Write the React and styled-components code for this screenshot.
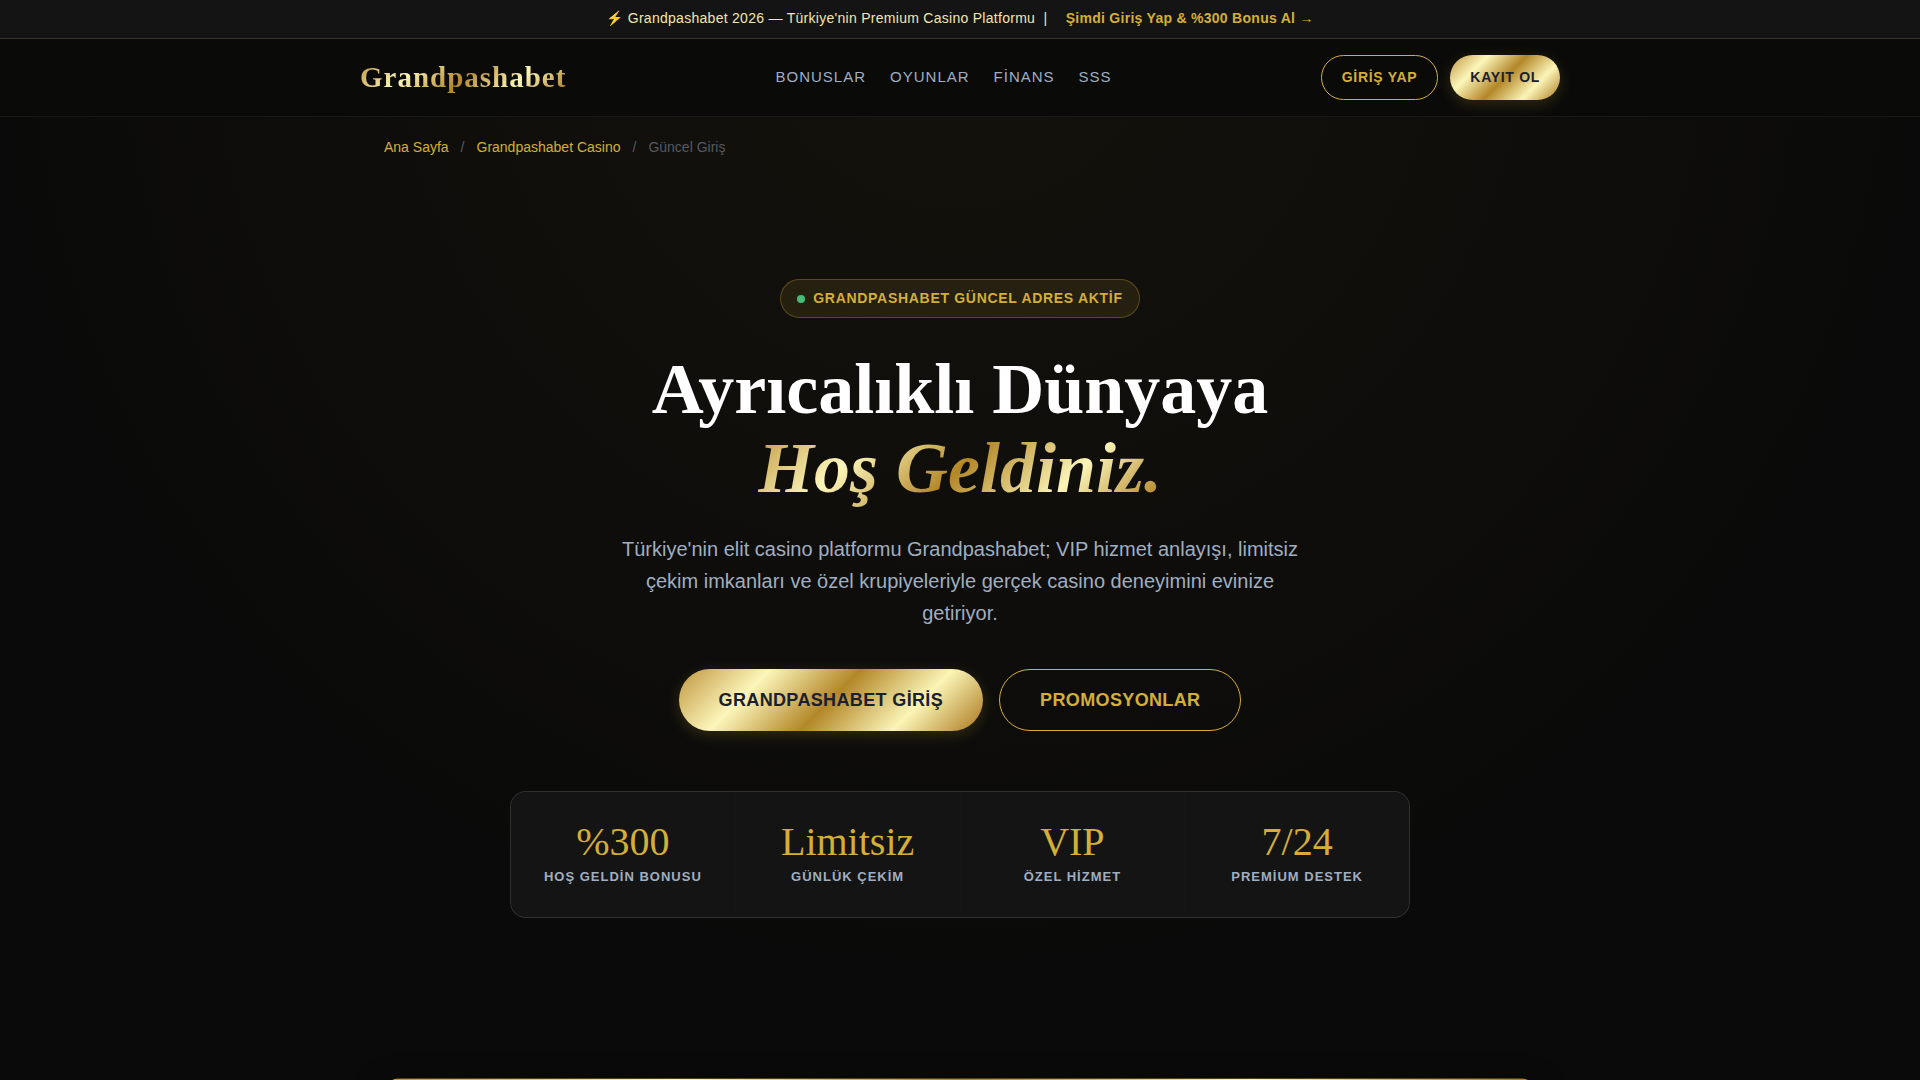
import React from 'react'
import styled, { createGlobalStyle, css } from 'styled-components'

const gold = '#d4af37'
const muted = '#a0aec0'
const goldGradient = 'linear-gradient(135deg, #bf953f 0%, #fcf6ba 25%, #b38728 50%, #fbf5b7 75%, #aa771c 100%)'
const sans = "'Liberation Sans', Arial, sans-serif"
const serif = "'Liberation Serif', 'Times New Roman', serif"

const navLinks = ['Bonuslar', 'Oyunlar', 'Finans', 'SSS']

const stats = [
    { value: '%300', label: 'Hoş Geldin Bonusu' },
    { value: 'Limitsiz', label: 'Günlük Çekim' },
    { value: 'VIP', label: 'Özel Hizmet' },
    { value: '7/24', label: 'Premium Destek' },
]

function App() {
    return (
        <Page lang="tr">
            <GlobalStyle />
            <TopBar>
                <span>⚡ Grandpashabet 2026 — Türkiye'nin Premium Casino Platformu &nbsp;|&nbsp;</span>
                <TopBarLink href="#giris">Şimdi Giriş Yap &amp; %300 Bonus Al →</TopBarLink>
            </TopBar>
            <Header>
                <HeaderInner>
                    <Logo href="#">Grandpashabet</Logo>
                    <Nav>
                        {navLinks.map((link) => (
                            <NavLink key={link} href={`#${link.toLowerCase()}`}>{link}</NavLink>
                        ))}
                    </Nav>
                    <HeaderActions>
                        <Button>Giriş Yap</Button>
                        <Button $filled>Kayıt Ol</Button>
                    </HeaderActions>
                </HeaderInner>
            </Header>
            <main>
                <Breadcrumb aria-label="Sayfa yolu">
                    <a href="#">Ana Sayfa</a>
                    <span>/</span>
                    <a href="#casino">Grandpashabet Casino</a>
                    <span>/</span>
                    <span>Güncel Giriş</span>
                </Breadcrumb>
                <Hero>
                    <Badge>
                        <Dot />
                        Grandpashabet Güncel Adres Aktif
                    </Badge>
                    <Title>
                        Ayrıcalıklı Dünyaya<br />
                        <em>Hoş Geldiniz.</em>
                    </Title>
                    <Lead>
                        Türkiye'nin elit casino platformu Grandpashabet; VIP hizmet anlayışı, limitsiz çekim imkanları ve özel krupiyeleriyle gerçek casino deneyimini evinize getiriyor.
                    </Lead>
                    <HeroActions>
                        <Button $large $filled>Grandpashabet Giriş</Button>
                        <Button $large>Promosyonlar</Button>
                    </HeroActions>
                    <Stats>
                        {stats.map((stat) => (
                            <Stat key={stat.label}>
                                <StatValue>{stat.value}</StatValue>
                                <StatLabel>{stat.label}</StatLabel>
                            </Stat>
                        ))}
                    </Stats>
                </Hero>
                <Section>
                    <Card />
                </Section>
            </main>
        </Page>
    )
}

const GlobalStyle = createGlobalStyle`
    * {
        box-sizing: border-box;
        margin: 0;
        padding: 0;
    }
    body {
        background: #0a0a0a;
        color: #fff;
        font-family: ${sans};
    }
    a {
        text-decoration: none;
    }
`

const Page = styled.div`
    height: 100vh;
    overflow: hidden;
    background: radial-gradient(circle at 50% 0%, rgba(212, 175, 55, 0.05) 0%, transparent 70%);
`

const TopBar = styled.div`
    display: flex;
    justify-content: center;
    gap: 14px;
    padding: 8px 16px 10px;
    background: #141414;
    border-bottom: 1px solid rgba(212, 175, 55, 0.2);
    color: #f3e5ab;
    font-size: 14px;
    line-height: 20px;
    letter-spacing: 0.02em;
`

const TopBarLink = styled.a`
    color: ${gold};
    font-weight: 700;
`

const Header = styled.header`
    background: #0a0a09;
    border-bottom: 1px solid rgba(255, 255, 255, 0.06);
`

const HeaderInner = styled.div`
    display: flex;
    align-items: center;
    justify-content: space-between;
    max-width: 1200px;
    margin: 0 auto;
    padding: 16px 0;
`

const goldText = css`
    background: ${goldGradient};
    -webkit-background-clip: text;
    background-clip: text;
    color: transparent;
`

const Logo = styled.a`
    ${goldText}
    font-family: ${serif};
    font-size: 29px;
    font-weight: 700;
    letter-spacing: 1px;
`

const Nav = styled.nav`
    display: flex;
    gap: 24px;
    padding-bottom: 2px;
`

const NavLink = styled.a`
    color: ${muted};
    font-size: 15px;
    letter-spacing: 1px;
    line-height: 24px;
    text-transform: uppercase;
`

const HeaderActions = styled.div`
    display: flex;
    gap: 12px;
`

const Button = styled.button`
    padding: ${(p) => (p.$large ? '15px 40px' : '10px 20px')};
    border: 1px solid ${gold};
    border-radius: 50px;
    background: transparent;
    color: ${gold};
    font-family: ${sans};
    font-size: ${(p) => (p.$large ? '18px' : '14px')};
    font-weight: 700;
    letter-spacing: ${(p) => (p.$large ? '0.02em' : '0.05em')};
    line-height: ${(p) => (p.$large ? '30px' : '23px')};
    text-transform: uppercase;
    cursor: pointer;

    ${(p) => p.$filled && css`
        border: none;
        background: ${goldGradient};
        color: #1a202c;
        box-shadow: 0 4px 15px rgba(212, 175, 55, 0.2);
    `}
`

const Breadcrumb = styled.nav`
    display: flex;
    gap: 12px;
    max-width: 1200px;
    margin: 0 auto;
    padding: 20px 24px 22px;
    color: #555a62;
    font-size: 14px;
    line-height: 20px;
    a {
        color: ${gold};
    }
`

const Hero = styled.section`
    display: flex;
    flex-direction: column;
    align-items: center;
    padding: 100px 24px 80px;
    text-align: center;
`

const Badge = styled.div`
    display: flex;
    align-items: center;
    gap: 8px;
    padding: 8px 16px;
    border: 1px solid rgba(212, 175, 55, 0.3);
    border-radius: 50px;
    background: rgba(212, 175, 55, 0.1);
    color: ${gold};
    font-size: 14px;
    font-weight: 700;
    letter-spacing: 0.05em;
    line-height: 21px;
    text-transform: uppercase;
`

const Dot = styled.span`
    width: 8px;
    height: 8px;
    border-radius: 50%;
    background: #48bb78;
    box-shadow: 0 0 10px rgba(72, 187, 120, 0.1);
`

const Title = styled.h1`
    margin: 32px 0 25px;
    font-family: ${serif};
    font-size: 72px;
    font-weight: 700;
    line-height: 79px;
    em {
        ${goldText}
    }
`

const Lead = styled.p`
    max-width: 700px;
    color: ${muted};
    font-size: 20px;
    line-height: 32px;
`

const HeroActions = styled.div`
    display: flex;
    flex-wrap: wrap;
    justify-content: center;
    gap: 16px;
    margin: 40px 0 60px;
`

const Stats = styled.div`
    display: grid;
    grid-template-columns: repeat(4, 1fr);
    gap: 1px;
    width: 100%;
    max-width: 900px;
    border: 1px solid rgba(255, 255, 255, 0.12);
    border-radius: 16px;
    background: #161616;
    overflow: hidden;
    @media (max-width: 768px) {
        grid-template-columns: 1fr 1fr;
    }
`

const Stat = styled.div`
    padding: 30px 20px;
    background: #141414;
`

const StatValue = styled.div`
    color: ${gold};
    font-family: ${serif};
    font-size: 40px;
    line-height: 40px;
`

const StatLabel = styled.div`
    margin-top: 4px;
    color: ${muted};
    font-size: 13px;
    font-weight: 700;
    letter-spacing: 1px;
    line-height: 21px;
    text-transform: uppercase;
`

const Section = styled.section`
    max-width: 1200px;
    margin: 0 auto;
    padding: 80px 24px;
`

const Card = styled.div`
    min-height: 320px;
    border: 1px solid rgba(212, 175, 55, 0.3);
    border-radius: 16px;
    background: ${goldGradient} top / 100% 4px no-repeat, #141414;
    box-shadow: 0 10px 30px rgba(0, 0, 0, 0.5);
`

export default App
